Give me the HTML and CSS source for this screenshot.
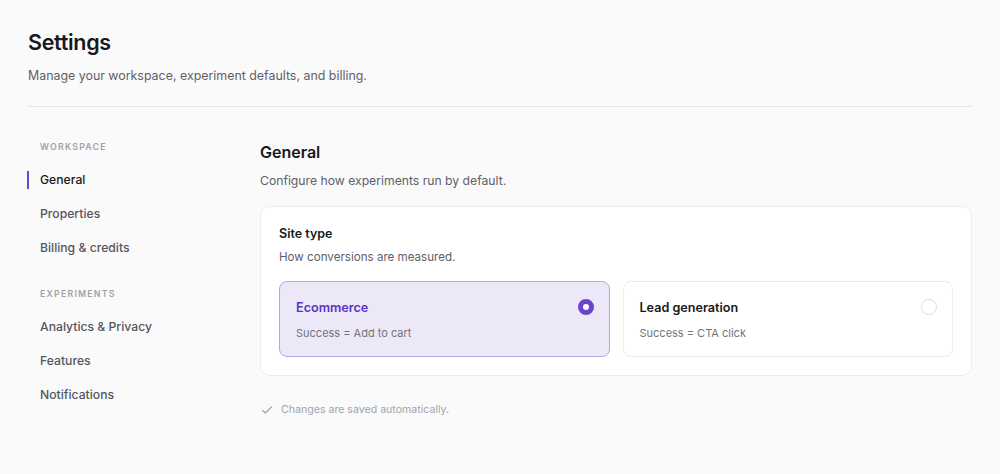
FILE: index.html
```html
<!DOCTYPE html>
<html lang="en">
<head>
    <meta charset="UTF-8">
    <meta name="viewport" content="width=device-width, initial-scale=1.0">
    <title>Settings</title>
    <link rel="stylesheet" href="styles.css">
</head>
<body>
    <div class="page">
        <div class="page-header">
            <h1>Settings</h1>
            <p>Manage your workspace, experiment defaults, and billing.</p>
        </div>

        <div class="layout">
            <nav class="sidebar">
                <div class="nav-group">
                    <div class="nav-label">Workspace</div>
                    <a class="nav-item active">General</a>
                    <a class="nav-item">Properties</a>
                    <a class="nav-item">Billing &amp; credits</a>
                </div>
                <div class="nav-group">
                    <div class="nav-label">Experiments</div>
                    <a class="nav-item">Analytics &amp; Privacy</a>
                    <a class="nav-item">Features</a>
                    <a class="nav-item">Notifications</a>
                </div>
            </nav>

            <main class="content">
                <h2>General</h2>
                <p class="section-desc">Configure how experiments run by default.</p>

                <div class="card">
                    <div class="card-title">Site type</div>
                    <div class="card-desc">How conversions are measured.</div>
                    <div class="options">
                        <div class="option selected">
                            <div class="option-head">
                                <span class="option-title">Ecommerce</span>
                                <span class="radio"></span>
                            </div>
                            <div class="option-sub">Success = Add to cart</div>
                        </div>
                        <div class="option">
                            <div class="option-head">
                                <span class="option-title">Lead generation</span>
                                <span class="radio"></span>
                            </div>
                            <div class="option-sub">Success = CTA click</div>
                        </div>
                    </div>
                </div>

                <div class="saved">
                    <svg width="12" height="12" viewBox="0 0 12 12" fill="none">
                        <path d="M1.5 6.3l2.8 2.7L10.5 3" stroke="#a3a3ab" stroke-width="1.2" stroke-linecap="round" stroke-linejoin="round"/>
                    </svg>
                    <span>Changes are saved automatically.</span>
                </div>
            </main>
        </div>
    </div>
</body>
</html>
```

FILE: styles.css
```css
body {
    margin: 0;
    background-color: #fafafa;
    font-family: Inter, "Noto Sans", sans-serif;
    color: #18181b;
}

.page {
    padding: 29px 28px 0;
}

.page-header {
    padding-bottom: 20px;
    border-bottom: 1px solid #e7e7ea;
}

.page-header h1 {
    margin: 0;
    font-size: 21.5px;
    font-weight: 600;
    letter-spacing: -0.3px;
    line-height: 26px;
}

.page-header p {
    margin: 11px 0 0;
    font-size: 12.4px;
    color: #606068;
    line-height: 20px;
}

.layout {
    display: flex;
    padding-top: 32px;
}

.sidebar {
    width: 232px;
    flex-shrink: 0;
}

.nav-group {
    margin-bottom: 21px;
}

.nav-label {
    padding-left: 12px;
    font-size: 8.8px;
    font-weight: 600;
    letter-spacing: 1.2px;
    text-transform: uppercase;
    color: #a1a1a9;
    line-height: 16px;
    margin-bottom: 8px;
}

.nav-item {
    position: relative;
    display: block;
    padding: 8px 12px;
    font-size: 12.2px;
    font-weight: 500;
    color: #55555d;
    line-height: 18px;
}

.nav-item.active {
    color: #18181b;
}

.nav-item.active::before {
    content: "";
    position: absolute;
    left: -1px;
    top: 8px;
    width: 2px;
    height: 18px;
    background-color: #6c47d4;
}

.content {
    flex: 1;
}

.content h2 {
    margin: 1px 0 0;
    font-size: 16px;
    font-weight: 600;
    line-height: 24px;
}

.section-desc {
    margin: 8px 0 0;
    font-size: 12.2px;
    color: #606068;
    line-height: 18px;
}

.card {
    margin-top: 16px;
    background-color: #ffffff;
    border: 1px solid #ececef;
    border-radius: 10px;
    padding: 18px 18px 18px;
}

.card-title {
    font-size: 12.5px;
    font-weight: 600;
    line-height: 18px;
}

.card-desc {
    margin-top: 6px;
    font-size: 11.6px;
    color: #606068;
    line-height: 16px;
}

.options {
    display: grid;
    grid-template-columns: 1fr 1fr;
    gap: 13px;
    margin-top: 16px;
}

.option {
    box-sizing: border-box;
    height: 76px;
    border: 1px solid #ececef;
    border-radius: 8px;
    padding: 0 16px;
    background-color: #ffffff;
}

.option.selected {
    background-color: #ede8f8;
    border-color: #b7a5ea;
}

.option-head {
    display: flex;
    justify-content: space-between;
    align-items: center;
    margin-top: 16px;
    height: 18px;
}

.option-title {
    font-size: 12.6px;
    font-weight: 600;
    color: #18181b;
}

.option.selected .option-title {
    color: #5b34c4;
}

.radio {
    width: 14px;
    height: 14px;
    border-radius: 50%;
    border: 1px solid #e0e0e4;
    background-color: #ffffff;
    margin-right: -1px;
}

.option.selected .radio {
    box-sizing: border-box;
    width: 16px;
    height: 16px;
    border: 5px solid #6a44cf;
    background-color: #ffffff;
}

.option-sub {
    margin-top: 9px;
    font-size: 11px;
    color: #73737b;
    line-height: 16px;
}

.saved {
    display: flex;
    align-items: center;
    gap: 8px;
    margin-top: 26px;
    padding-left: 1px;
    font-size: 10.6px;
    color: #a3a3ab;
    line-height: 16px;
}
```
